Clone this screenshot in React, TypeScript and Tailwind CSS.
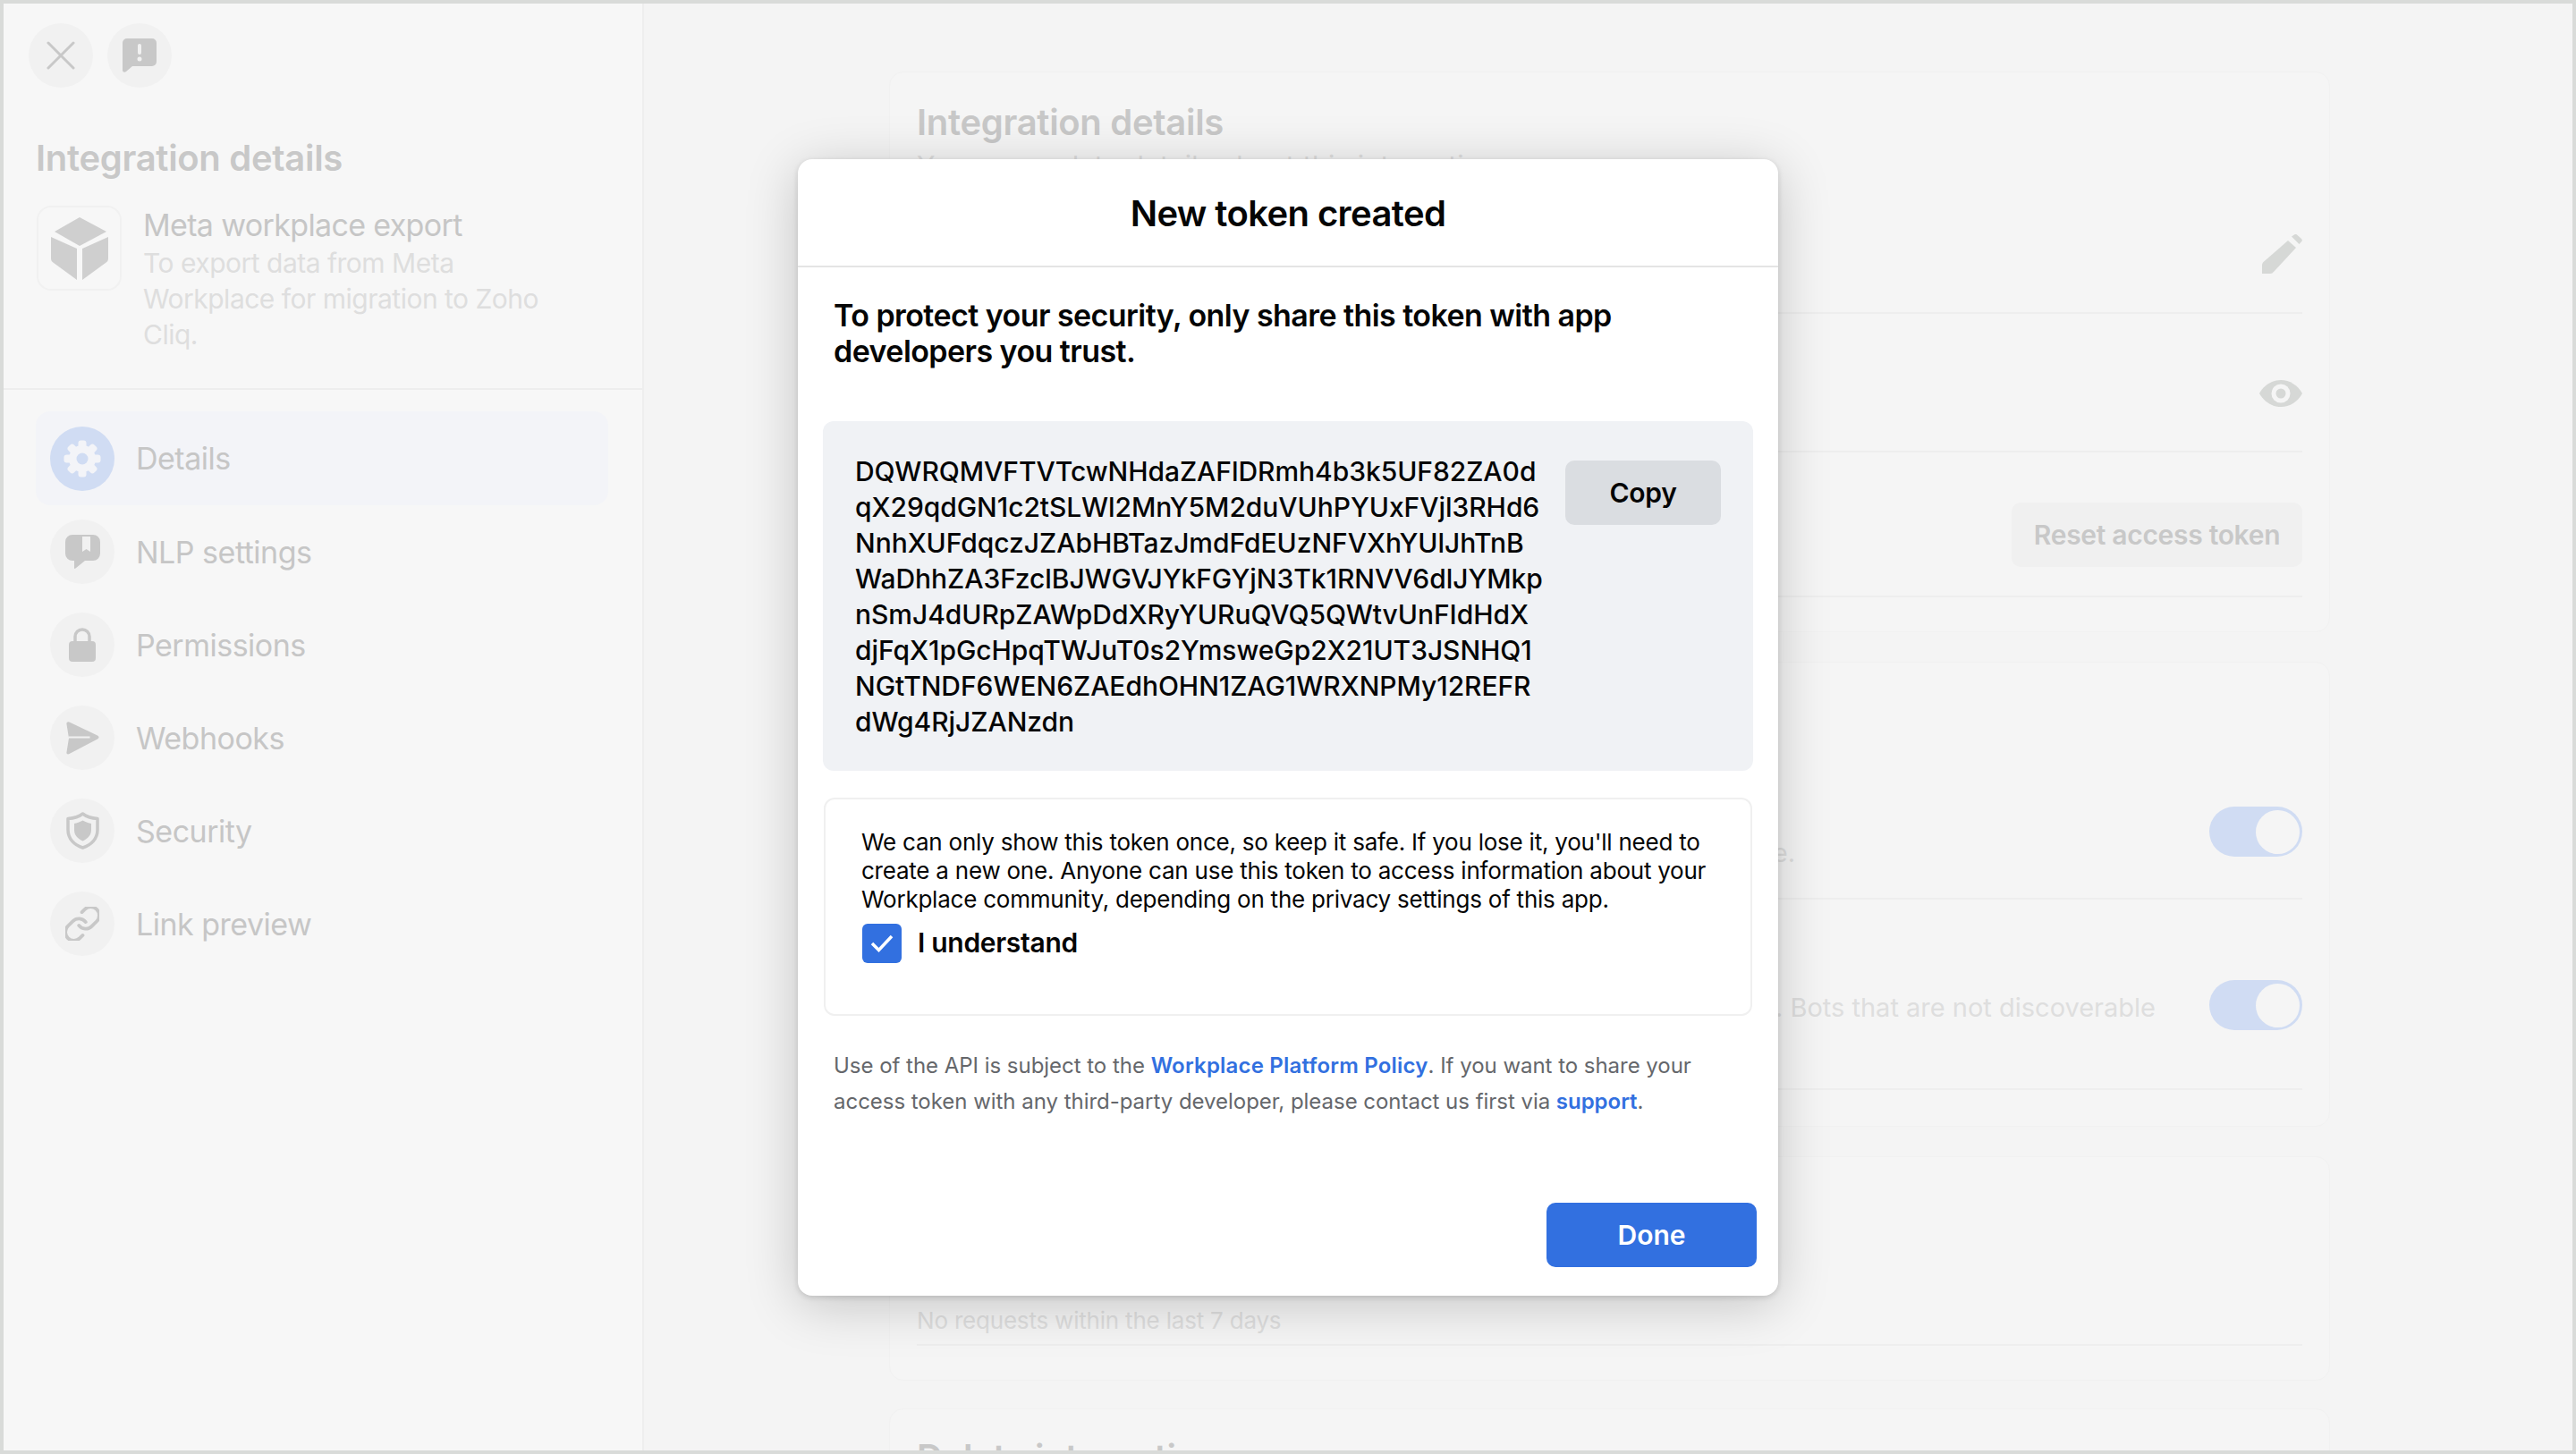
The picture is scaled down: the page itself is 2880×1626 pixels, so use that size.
const tokenLines = [
  "DQWRQMVFTVTcwNHdaZAFlDRmh4b3k5UF82ZA0d",
  "qX29qdGN1c2tSLWl2MnY5M2duVUhPYUxFVjl3RHd6",
  "NnhXUFdqczJZAbHBTazJmdFdEUzNFVXhYUlJhTnB",
  "WaDhhZA3FzclBJWGVJYkFGYjN3Tk1RNVV6dlJYMkp",
  "nSmJ4dURpZAWpDdXRyYURuQVQ5QWtvUnFIdHdX",
  "djFqX1pGcHpqTWJuT0s2YmsweGp2X21UT3JSNHQ1",
  "NGtTNDF6WEN6ZAEdhOHN1ZAG1WRXNPMy12REFR",
  "dWg4RjJZANzdn",
];

function GearIcon() {
  const teeth = [0, 45, 90, 135, 180, 225, 270, 315];
  return (
    <svg width="42" height="42" viewBox="0 0 42 42">
      {teeth.map((a) => (
        <rect key={a} x="16.5" y="0.5" width="9" height="10" rx="3" fill="#f3f4f8" transform={`rotate(${a} 21 21)`} />
      ))}
      <circle cx="21" cy="21" r="15" fill="#f3f4f8" />
      <circle cx="21" cy="21" r="6.5" fill="#d0dcf3" />
    </svg>
  );
}

function NlpIcon() {
  return (
    <svg width="39" height="38" viewBox="0 0 39 38">
      <path fill="#c8c8c8" d="M8 0h23a8 8 0 0 1 8 8v13a8 8 0 0 1-8 8h-9L11.500 37.500c-1 .8-1.500.3-1.500-.5v-8H8a8 8 0 0 1-8-8V8a8 8 0 0 1 8-8z" />
      <path fill="#f1f1f1" d="M19 2h9v17l-4.500-3-4.500 3z" />
    </svg>
  );
}

function LockIcon() {
  return (
    <svg width="30" height="38" viewBox="0 0 30 38">
      <path d="M7 17V10a8 8 0 0 1 16 0v7" fill="none" stroke="#c8c8c8" strokeWidth="3.500" />
      <rect x="0" y="15" width="30" height="23" rx="4" fill="#c8c8c8" />
    </svg>
  );
}

function SendIcon() {
  return (
    <svg width="37" height="37" viewBox="0 0 37 37">
      <path d="M3.500.5 35 15.500c2 1 2 3 0 4L3.500 36c-2 1-3.500 0-3-2L3 18.500.5 3c-.5-2 1-3.500 3-2.500z" fill="#c8c8c8" />
      <rect x="2.500" y="16.500" width="24" height="2" fill="#f1f1f1" />
    </svg>
  );
}

function ShieldIcon() {
  return (
    <svg width="37" height="42" viewBox="0 0 37 42">
      <path d="M18.500 2 C23 5.500 29 7 35 7.500 V20 C35 30 28 37 18.500 40 C9 37 2 30 2 20 V7.500 C8 7 14 5.500 18.500 2z" fill="none" stroke="#c8c8c8" strokeWidth="3.500" strokeLinejoin="round" />
      <path d="M18.500 9.500 C22 11.500 25 12.500 28 13 V20 C28 26 24 30 18.500 32.500 C13 30 9 26 9 20 V13 C12 12.500 15 11.500 18.500 9.500z" fill="#c8c8c8" />
    </svg>
  );
}

function LinkIcon() {
  return (
    <svg width="38" height="38" viewBox="2 2 20 20" fill="none" stroke="#c8c8c8" strokeWidth="2" strokeLinecap="round" strokeLinejoin="round">
      <path d="M10 13a5 5 0 0 0 7.540.54l3-3a5 5 0 0 0-7.070-7.070l-1.720 1.710" />
      <path d="M14 11a5 5 0 0 0-7.540-.54l-3 3a5 5 0 0 0 7.070 7.070l1.710-1.710" />
    </svg>
  );
}

const navItems = [
  { label: "Details", icon: <GearIcon />, active: true },
  { label: "NLP settings", icon: <NlpIcon /> },
  { label: "Permissions", icon: <LockIcon /> },
  { label: "Webhooks", icon: <SendIcon /> },
  { label: "Security", icon: <ShieldIcon /> },
  { label: "Link preview", icon: <LinkIcon /> },
];

function Toggle() {
  return (
    <div className="flex h-[56px] w-[104px] shrink-0 items-center justify-end rounded-full bg-[#d0dcf3] pr-[3px]">
      <div className="h-[49px] w-[49px] rounded-full bg-[#f5f5f5]" />
    </div>
  );
}

function Sidebar() {
  return (
    <aside className="h-full w-[716px] shrink-0 border-r-2 border-[#eeeeee] bg-[#f7f7f7]">
      <div className="flex gap-[16px] pl-[28px] pt-[22px]">
        <div className="flex h-[72px] w-[72px] items-center justify-center rounded-full bg-[#f1f1f1]">
          <svg width="32" height="32" viewBox="0 0 32 32" stroke="#c8c8c8" strokeWidth="3" strokeLinecap="round">
            <path d="M2 2 30 30M30 2 2 30" />
          </svg>
        </div>
        <div className="flex h-[72px] w-[72px] items-center justify-center rounded-full bg-[#f1f1f1]">
          <svg width="38" height="38" viewBox="0 0 38 38">
            <path d="M5 0h28a5 5 0 0 1 5 5v21a5 5 0 0 1-5 5H11l-7 6c-2 1.500-4 .5-4-1.500V5a5 5 0 0 1 5-5z" fill="#c8c8c8" />
            <rect x="17" y="6" width="4" height="12" rx="2" fill="#f1f1f1" />
            <circle cx="19" cy="23" r="2.500" fill="#f1f1f1" />
          </svg>
        </div>
      </div>
      <h2 className="mt-[57px] pl-[36px] text-[40px] leading-[44px] font-semibold tracking-[-0.3px] text-[#c8c8c8]">Integration details</h2>
      <div className="mt-[31px] flex pl-[37px]">
        <div className="flex h-[95px] w-[95px] shrink-0 items-center justify-center rounded-[16px] border-2 border-[#f1f1f1]">
          <svg width="64" height="70" viewBox="0 0 64 70" fill="#cfcfcf">
            <path d="M32 0 62 16 32 32 4 16z" />
            <path d="M0 22 29 35V70L3 51c-2-1-3-3-3-5z" />
            <path d="M64 22 35 35V70L61 51c2-1 3-3 3-5z" />
          </svg>
        </div>
        <div className="ml-[24px] w-[470px]">
          <div className="text-[34px] leading-[44px] tracking-[-0.65px] text-[#c6c6c6]">Meta workplace export</div>
          <div className="text-[30px] leading-[40px] tracking-[-0.5px] text-[#dedede]">
            To export data from Meta Workplace for migration to Zoho Cliq.
          </div>
        </div>
      </div>
      <div className="mt-[40px] h-[2px] bg-[#eeeeee]" />
      <nav className="ml-[36px] mr-[38px] mt-[24px] flex flex-col">
        {navItems.map((item) => (
          <div
            key={item.label}
            className={
              item.active
                ? "flex h-[105px] items-center gap-[24px] rounded-[16px] bg-[#f3f4f8] pl-[16px]"
                : "flex h-[104px] items-center gap-[24px] pl-[16px]"
            }
          >
            <div
              className={
                item.active
                  ? "flex h-[72px] w-[72px] items-center justify-center rounded-full bg-[#d0dcf3]"
                  : "flex h-[72px] w-[72px] items-center justify-center rounded-full bg-[#f1f1f1]"
              }
            >
              {item.icon}
            </div>
            <span className="text-[34px] tracking-[-0.5px] text-[#c6c6c6]">{item.label}</span>
          </div>
        ))}
      </nav>
    </aside>
  );
}

function Row({ className, children }: { className: string; children: React.ReactNode }) {
  return <div className={`flex items-center justify-end border-b-2 border-[#eeeeee] ${className}`}>{children}</div>;
}

function MainColumn() {
  const card = "rounded-[16px] border border-[#f1f1f1] bg-[#f5f5f5] pl-[30px] pr-[30px]";
  return (
    <main className="flex h-full flex-1 flex-col gap-[33px] overflow-hidden bg-[#f4f4f4] pl-[274px] pr-[271px] pt-[76px]">
      <section className={`${card} h-[627px] shrink-0`}>
        <h2 className="pt-[34px] text-[40px] leading-[44px] font-semibold tracking-[-0.3px] text-[#c8c8c8]">Integration details</h2>
        <p className="mt-[6px] text-[30px] leading-[40px] tracking-[0.4px] text-[#dedede]">You can update details about this integration</p>
        <Row className="h-[146px] pt-[14px]">
          <svg width="45" height="44" viewBox="0 0 45 44" fill="#d6d8d6">
            <path d="M29 7 38 15 13 42c-1 1-2 2-4 2H0v-9c0-2 .5-3 1.500-4z" />
            <path d="M33 2.500 36 .5c1-.8 2-.8 3 0L44 5c1 1 1 2 .3 3L41.500 11z" />
          </svg>
        </Row>
        <Row className="h-[155px] pt-[24px]">
          <svg width="48" height="30" viewBox="0 0 48 30">
            <path d="M24 0c10 0 19 6 24 15-5 9-14 15-24 15S5 24 0 15C5 6 14 0 24 0z" fill="#d6d8d6" />
            <circle cx="24" cy="15" r="10.500" fill="#f5f5f5" />
            <circle cx="24" cy="15" r="5.500" fill="#d6d8d6" />
          </svg>
        </Row>
        <Row className="h-[162px] pt-[24px]">
          <div className="flex h-[72px] w-[325px] items-center justify-center rounded-[10px] bg-[#f0f0f0] text-[30px] font-semibold tracking-[-0.3px] text-[#c8c8c8]">
            Reset access token
          </div>
        </Row>
      </section>
      <section className={`${card} h-[520px] shrink-0 pt-[103px]`}>
        <Row className="h-[162px] items-start gap-[463px]">
          <p className="mt-[90px] whitespace-nowrap text-[29px] leading-[40px] text-[#dedede]">Allow people to find this integration in your Workplace.</p>
          <div className="mt-[58px]"><Toggle /></div>
        </Row>
        <Row className="h-[213px] items-start gap-[60px]">
          <p className="mt-[101px] whitespace-nowrap text-[29px] leading-[40px] text-[#dedede]">This integration can be found in search. Bots that are not discoverable</p>
          <div className="mt-[90px]"><Toggle /></div>
        </Row>
      </section>
      <section className={`${card} h-[251px] shrink-0`}>
        <div className="flex h-[211px] items-end border-b-2 border-[#eeeeee] pb-[6px]">
          <p className="text-[26px] leading-[40px] tracking-[-0.2px] text-[#dedede]">No requests within the last 7 days</p>
        </div>
      </section>
      <section className={`${card} -mt-[2px] h-[200px] shrink-0`}>
        <h2 className="pt-[32px] text-[40px] leading-[44px] font-semibold tracking-[-0.3px] text-[#c8c8c8]">Delete integration</h2>
      </section>
    </main>
  );
}

function TokenModal() {
  return (
    <div className="absolute left-[888px] top-[174px] flex h-[1271px] w-[1096px] flex-col rounded-[16px] bg-white shadow-[0_2px_6px_rgba(0,0,0,0.14),0_10px_60px_rgba(0,0,0,0.2)]">
      <div className="flex h-[121px] shrink-0 items-center justify-center border-b-2 border-[#e4e4e4] pt-[2px] text-[40px] font-semibold tracking-[-0.6px] text-[#050505]">
        New token created
      </div>
      <p className="mx-[40px] mt-[34px] text-[34px] leading-[40px] font-semibold tracking-[-0.56px] text-[#050505]">
        To protect your security, only share this token with app developers you trust.
      </p>
      <div className="mx-[28px] mt-[58px] flex h-[391px] shrink-0 rounded-[12px] bg-[#f0f2f5] pl-[36px] pr-[36px] pt-[36px]">
        <div className="flex-1 text-[30px] leading-[40px] font-medium tracking-[-0.05px] whitespace-nowrap text-[#050505]">
          {tokenLines.map((line) => (
            <div key={line}>{line}</div>
          ))}
        </div>
        <div className="mt-[8px] flex h-[72px] w-[174px] items-center justify-center rounded-[10px] bg-[#dadde1] text-[30px] font-semibold tracking-[-0.3px] text-[#050505]">
          Copy
        </div>
      </div>
      <div className="mx-[29px] mt-[30px] h-[244px] shrink-0 rounded-[12px] border-2 border-[#f0f0f0] pl-[40px] pr-[20px] pt-[32px]">
        <p className="text-[26px] leading-[32px] tracking-[-0.23px] text-[#050505]">
          We can only show this token once, so keep it safe. If you lose it, you'll need to create a new one. Anyone can use this token to access information about your Workplace community, depending on the privacy settings of this app.
        </p>
        <div className="ml-[1px] mt-[10px] flex items-center gap-[18px]">
          <div className="flex h-[44px] w-[44px] items-center justify-center rounded-[6px] bg-[#3270e0]">
            <svg width="26" height="20" viewBox="0 0 26 20" fill="none" stroke="#ffffff" strokeWidth="3.500">
              <path d="M2 10 9.500 17.500 24 2" />
            </svg>
          </div>
          <span className="text-[30px] font-semibold tracking-[-0.3px] text-[#050505]">I understand</span>
        </div>
      </div>
      <p className="mx-[40px] mt-[36px] text-[24px] leading-[40px] tracking-[-0.03px] text-[#65676b]">
        Use of the API is subject to the <span className="font-semibold tracking-[0.2px] text-[#3270e0]">Workplace Platform Policy</span>. If you want to share your access token with any third-party developer, please contact us first via <span className="font-semibold text-[#3270e0]">support</span>.
      </p>
      <div className="mb-[32px] mr-[24px] mt-auto flex h-[72px] w-[235px] items-center justify-center self-end rounded-[10px] bg-[#3270e0] text-[30px] font-semibold text-white">
        Done
      </div>
    </div>
  );
}

export default function App() {
  return (
    <div className="relative flex h-[1626px] w-[2880px] overflow-hidden border-4 border-[#d9dbd9] font-['Inter',sans-serif]">
      <Sidebar />
      <MainColumn />
      <TokenModal />
    </div>
  );
}
